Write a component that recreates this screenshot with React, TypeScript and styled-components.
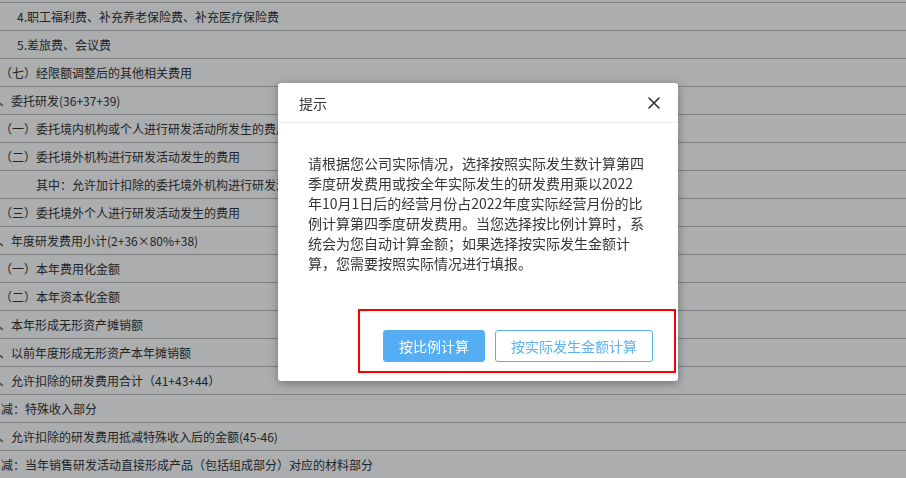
import * as React from 'react';
import styled, { createGlobalStyle } from 'styled-components';

const fontStack = `"Microsoft YaHei", "Noto Sans CJK SC", "Noto Sans", sans-serif`;

const GlobalStyle = createGlobalStyle`
  html, body {
    margin: 0;
    padding: 0;
    width: 100%;
    height: 100%;
    overflow: hidden;
    background: #fff;
  }
  body {
    font-family: ${fontStack};
  }
`;

interface FormRow {
  label: string;
  indent: number;
}

// the sheet is scrolled: first row sits above the fold, level-one numbers run off the left edge
const rows: FormRow[] = [
  { label: '3.知识产权的申请费、注册费、代理费', indent: 17 },
  { label: '4.职工福利费、补充养老保险费、补充医疗保险费', indent: 17 },
  { label: '5.差旅费、会议费', indent: 17 },
  { label: '（七）经限额调整后的其他相关费用', indent: 0 },
  { label: '二、委托研发(36+37+39)', indent: -13 },
  { label: '（一）委托境内机构或个人进行研发活动所发生的费用', indent: 0 },
  { label: '（二）委托境外机构进行研发活动发生的费用', indent: 0 },
  { label: '其中：允许加计扣除的委托境外机构进行研发活动发生的费用', indent: 36 },
  { label: '（三）委托境外个人进行研发活动发生的费用', indent: 0 },
  { label: '三、年度研发费用小计(2+36×80%+38)', indent: -13 },
  { label: '（一）本年费用化金额', indent: 0 },
  { label: '（二）本年资本化金额', indent: 0 },
  { label: '四、本年形成无形资产摊销额', indent: -13 },
  { label: '五、以前年度形成无形资产本年摊销额', indent: -13 },
  { label: '六、允许扣除的研发费用合计（41+43+44）', indent: -13 },
  { label: '减：特殊收入部分', indent: 1 },
  { label: '七、允许扣除的研发费用抵减特殊收入后的金额(45-46)', indent: -13 },
  { label: '减：当年销售研发活动直接形成产品（包括组成部分）对应的材料部分', indent: 1 },
  { label: '八、当年可加计扣除的研发费用总额', indent: -13 },
];

const Page = styled.div`
  position: relative;
  width: 100%;
  height: 100vh;
  overflow: hidden;
`;

const Sheet = styled.div`
  margin-top: -25px;
  display: flex;
  flex-direction: column;
`;

const Row = styled.div<{ $indent: number }>`
  height: 27px;
  line-height: 27px;
  border-bottom: 1px solid #bdbdbd;
  text-indent: ${p => p.$indent}px;
  font-size: 12px;
  color: #333;
  white-space: nowrap;
  overflow: hidden;
`;

const Mask = styled.div`
  position: fixed;
  inset: 0;
  background: rgba(0, 5, 8, 0.33);
`;

const Dialog = styled.div`
  position: fixed;
  left: 278px;
  top: 83px;
  width: 400px;
  background: #fff;
  border-radius: 3px;
  box-shadow: 0 2px 10px rgba(0, 0, 0, 0.35);
  display: flex;
  flex-direction: column;
  padding-bottom: 8px;
  box-sizing: border-box;
`;

const DialogHeader = styled.div`
  height: 40px;
  box-sizing: border-box;
  border-bottom: 1px solid #eaeaea;
  padding: 0 18px 0 21px;
  display: flex;
  align-items: center;
  justify-content: space-between;
`;

const Title = styled.span`
  font-size: 14px;
  color: #333;
`;

const CloseButton = styled.button`
  border: 0;
  background: none;
  padding: 0;
  width: 12px;
  height: 12px;
  display: flex;
  cursor: pointer;
`;

const DialogBody = styled.div`
  padding: 30px 33px 0 30px;
  font-size: 14px;
  line-height: 20px;
  color: #363636;
`;

const Highlight = styled.div`
  margin: 36px 2px 0 80px;
  border: 2px solid #ff0000;
  padding: 19px 21px 9px 0;
  display: flex;
  justify-content: flex-end;
  gap: 10px;
`;

const Button = styled.button<{ $primary?: boolean }>`
  height: 32px;
  padding: 0 15px;
  border-radius: 3px;
  font-family: ${fontStack};
  font-size: 14px;
  cursor: pointer;
  border: 1px solid #58aef2;
  background: ${p => (p.$primary ? '#55aef4' : '#fff')};
  color: ${p => (p.$primary ? '#fff' : '#5eb2f3')};
`;

const CloseIcon = () => (
  <svg width="12" height="12" viewBox="0 0 12 12">
    <path d="M1 1 L11 11 M11 1 L1 11" stroke="#2c2c38" strokeWidth="1.6" strokeLinecap="round" />
  </svg>
);

export default function App() {
  return (
    <Page>
      <GlobalStyle />
      <Sheet>
        {rows.map(row => (
          <Row key={row.label} $indent={row.indent}>
            {row.label}
          </Row>
        ))}
      </Sheet>
      <Mask />
      <Dialog>
        <DialogHeader>
          <Title>提示</Title>
          <CloseButton aria-label="close">
            <CloseIcon />
          </CloseButton>
        </DialogHeader>
        <DialogBody>
          请根据您公司实际情况，选择按照实际发生数计算第四季度研发费用或按全年实际发生的研发费用乘以2022年10月1日后的经营月份占2022年度实际经营月份的比例计算第四季度研发费用。当您选择按比例计算时，系统会为您自动计算金额；如果选择按实际发生金额计算，您需要按照实际情况进行填报。
        </DialogBody>
        <Highlight>
          <Button $primary>按比例计算</Button>
          <Button>按实际发生金额计算</Button>
        </Highlight>
      </Dialog>
    </Page>
  );
}
